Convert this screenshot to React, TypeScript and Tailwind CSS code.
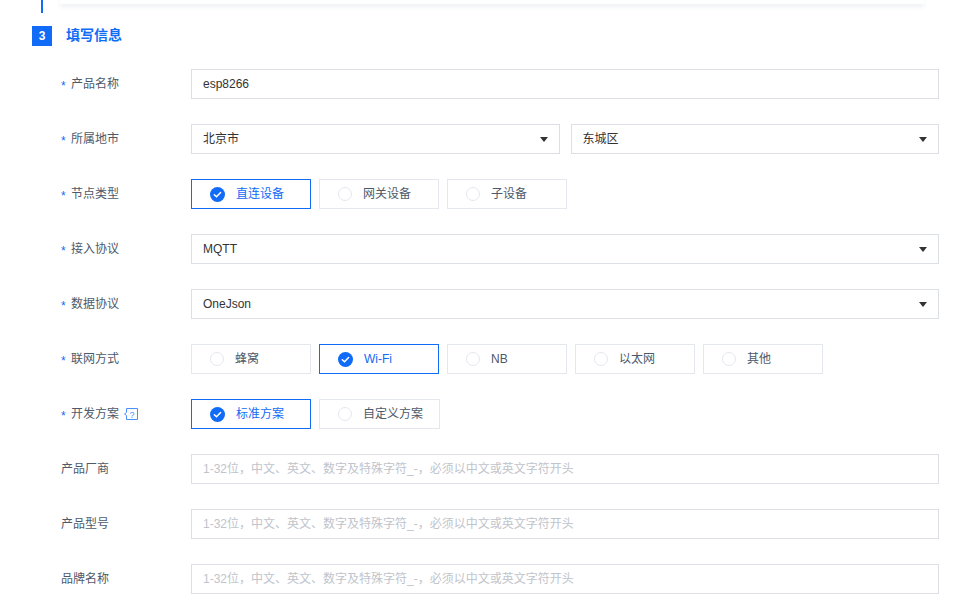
import React from "react"

const font = { fontFamily: '"Liberation Sans", "Noto Sans CJK SC", sans-serif' }

const placeholder = "1-32位，中文、英文、数字及特殊字符_-，必须以中文或英文字符开头"

function Caret() {
  return (
    <svg width="8" height="5" viewBox="0 0 8 5" className="shrink-0">
      <path d="M0 0h8L4 5z" fill="#333" />
    </svg>
  )
}

function Label({ text, required = true, help = false }: { text: string; required?: boolean; help?: boolean }) {
  return (
    <div className="w-[130px] shrink-0 flex items-center text-[12px] text-[#4e5969]">
      {required && <span className="w-[10px] text-[#106bf6] text-[12px] leading-none pt-[3px]">*</span>}
      <span>{text}</span>
      {help && (
        <svg width="14" height="12" viewBox="0 0 14 12" className="ml-[5px]">
          <path d="M2.5 0.5h11v11h-11v-4l-2-1.5 2-1.5z" fill="none" stroke="#4a8ff7" strokeWidth="1" />
          <text x="8" y="9.5" textAnchor="middle" fontSize="9" fill="#4a8ff7" fontFamily="Liberation Sans, sans-serif">?</text>
        </svg>
      )}
    </div>
  )
}

function Input({ value }: { value?: string }) {
  return (
    <div className="flex-1 h-[30px] border border-[#dcdfe6] flex items-center px-[11px] text-[12px]">
      {value ? <span className="text-[#333]">{value}</span> : <span className="text-[#c0c4cc]">{placeholder}</span>}
    </div>
  )
}

function Select({ value }: { value: string }) {
  return (
    <div className="flex-1 h-[30px] border border-[#dcdfe6] flex items-center justify-between pl-[11px] pr-[11px] text-[12px] text-[#333]">
      <span>{value}</span>
      <Caret />
    </div>
  )
}

function Radio({ text, checked = false, wide = false }: { text: string; checked?: boolean; wide?: boolean }) {
  return (
    <div
      className={
        "h-[30px] flex items-center pl-[18px] text-[12px] border " +
        (wide ? "w-[121px] " : "w-[120px] ") +
        (checked ? "border-[#106bf6] text-[#106bf6]" : "border-[#e4e7ed] text-[#4e5969]")
      }
    >
      {checked ? (
        <svg width="15" height="15" viewBox="0 0 16 16" className="shrink-0">
          <circle cx="8" cy="8" r="8" fill="#106bf6" />
          <path d="M4.6 8.2l2.3 2.3 4.4-4.6" fill="none" stroke="#fff" strokeWidth="1.6" strokeLinecap="round" strokeLinejoin="round" />
        </svg>
      ) : (
        <span className="w-[14px] h-[14px] rounded-full border border-[#e4e7ed] shrink-0" />
      )}
      <span className="ml-[11px]">{text}</span>
    </div>
  )
}

function Row({ children }: { children: React.ReactNode }) {
  return <div className="flex items-center h-[30px] pl-[61px] pr-[15px]">{children}</div>
}

export default function App() {
  return (
    <div className="w-[954px] h-[606px] bg-white overflow-hidden" style={font}>
      <div className="flex items-start h-[14px] pl-[41px]">
        <div className="w-[2px] h-[13px] bg-[#106bf6]" />
        <div className="ml-[17px] w-[864px] h-[4px] bg-white rounded-b-[2px] shadow-[0_2px_5px_rgba(120,140,180,0.18)]" />
      </div>

      <div className="flex items-center mt-[11px] pl-[32px]">
        <div className="w-[20px] h-[20px] bg-[#106bf6] text-white text-[12px] font-bold flex items-center justify-center">3</div>
        <div className="ml-[14px] text-[14px] font-bold text-[#106bf6]">填写信息</div>
      </div>

      <div className="flex flex-col gap-[25px] mt-[23px]">
        <Row>
          <Label text="产品名称" />
          <Input value="esp8266" />
        </Row>
        <Row>
          <Label text="所属地市" />
          <div className="flex-1 flex gap-[11px]">
            <Select value="北京市" />
            <Select value="东城区" />
          </div>
        </Row>
        <Row>
          <Label text="节点类型" />
          <div className="flex gap-[8px]">
            <Radio text="直连设备" checked />
            <Radio text="网关设备" />
            <Radio text="子设备" />
          </div>
        </Row>
        <Row>
          <Label text="接入协议" />
          <Select value="MQTT" />
        </Row>
        <Row>
          <Label text="数据协议" />
          <Select value="OneJson" />
        </Row>
        <Row>
          <Label text="联网方式" />
          <div className="flex gap-[8px]">
            <Radio text="蜂窝" />
            <Radio text="Wi-Fi" checked />
            <Radio text="NB" />
            <Radio text="以太网" />
            <Radio text="其他" />
          </div>
        </Row>
        <Row>
          <Label text="开发方案" help />
          <div className="flex gap-[8px]">
            <Radio text="标准方案" checked />
            <Radio text="自定义方案" wide />
          </div>
        </Row>
        <Row>
          <Label text="产品厂商" required={false} />
          <Input />
        </Row>
        <Row>
          <Label text="产品型号" required={false} />
          <Input />
        </Row>
        <Row>
          <Label text="品牌名称" required={false} />
          <Input />
        </Row>
      </div>
    </div>
  )
}
